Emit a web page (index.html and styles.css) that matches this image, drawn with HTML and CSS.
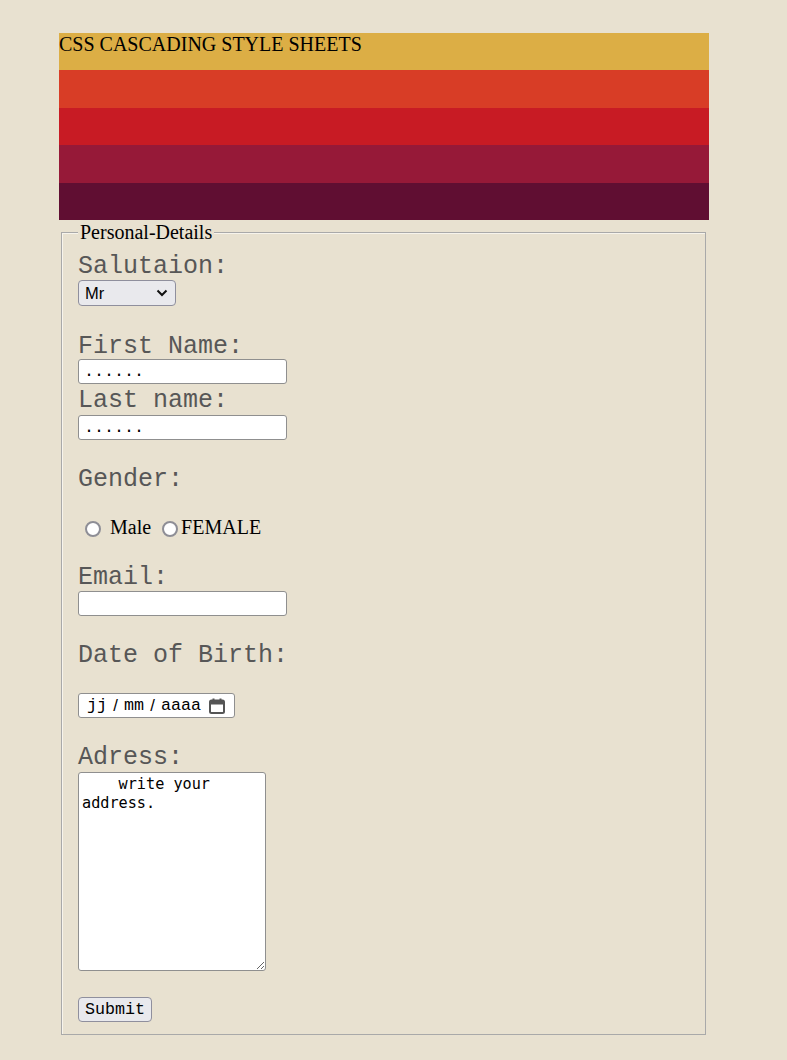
FILE: index.html
```html
<!DOCTYPE html>
<html lang="fr">
<head>
<meta charset="utf-8">
<title>CSS Cascading Style Sheets</title>
<link rel="stylesheet" href="styles.css">
</head>
<body>
<div class="wrap">
  <div class="banner">
    <div class="stripe s1">CSS CASCADING STYLE SHEETS</div>
    <div class="stripe s2"></div>
    <div class="stripe s3"></div>
    <div class="stripe s4"></div>
    <div class="stripe s5"></div>
  </div>
  <form class="form">
    <fieldset class="fs">
      <legend class="legend">Personal-Details</legend>
      <label class="lbl l-sal" for="sal">Salutaion:</label>
      <div class="select-box">
        <select id="sal" class="sel"><option>Mr</option><option>Mrs</option><option>Ms</option></select>
        <svg class="chev" width="12" height="8" viewBox="0 0 12 8"><path d="M1.5 1.5 L6 6 L10.5 1.5" fill="none" stroke="#111" stroke-width="2"/></svg>
      </div>
      <label class="lbl l-first" for="fn">First Name:</label>
      <input id="fn" class="txt t-first" type="text" value="......">
      <label class="lbl l-last" for="ln">Last name:</label>
      <input id="ln" class="txt t-last" type="text" value="......">
      <div class="lbl l-gender">Gender:</div>
      <div class="radios">
        <input class="rad r1" type="radio" name="g" id="m"><label class="rlbl" for="m">Male</label>
        <input class="rad r2" type="radio" name="g" id="f"><label class="rlbl" for="f">FEMALE</label>
      </div>
      <label class="lbl l-email" for="em">Email:</label>
      <input id="em" class="txt t-email" type="text">
      <div class="lbl l-dob">Date of Birth:</div>
      <div class="date">
        <span class="seg">jj</span><span class="sep">/</span><span class="seg">mm</span><span class="sep">/</span><span class="seg">aaaa</span>
        <svg class="cal" width="16" height="16" viewBox="0 0 16 16"><rect x="1" y="2.5" width="14" height="12.5" rx="1.5" fill="none" stroke="#555" stroke-width="2"/><rect x="1" y="2.5" width="14" height="4" fill="#555"/><rect x="3.5" y="0.5" width="2" height="3" fill="#555"/><rect x="10.5" y="0.5" width="2" height="3" fill="#555"/></svg>
      </div>
      <label class="lbl l-addr" for="ad">Adress:</label>
      <textarea id="ad" class="area">    write your address.</textarea>
      <button type="button" class="btn">Submit</button>
    </fieldset>
  </form>
</div>
</body>
</html>
```
FILE: styles.css
```css
html, body {
  margin: 0;
  padding: 0;
  background: #e8e1d0;
}
body {
  padding: 33px 0 0 59px;
  font-family: "Liberation Serif", "Times New Roman", serif;
}
.wrap {
  width: 650px;
}
.banner {
  display: flex;
  flex-direction: column;
}
.stripe {
  height: 37px;
}
.s1 {
  background: #dcae45;
  font-size: 20px;
  line-height: 23px;
  color: #000;
}
.s2 { background: #d83d26; height: 38px; }
.s3 { background: #c81b24; }
.s4 { background: #961938; height: 38px; }
.s5 { background: #600e32; }

.form {
  margin: 0;
}
.fs {
  margin: 1px 3px 0 2px;
  padding: 9px 15px 12px 16px;
  border: 1px solid #a9a9a9;
  box-shadow: inset 1px 1px 0 #f7f4ec;
  display: flex;
  flex-direction: column;
  align-items: flex-start;
  min-width: 0;
}
.legend {
  font-size: 20px;
  line-height: 23px;
  padding: 0 2px;
  color: #000;
  background: #e8e1d0;
}
.lbl {
  display: block;
  font-family: "Liberation Mono", "Courier New", monospace;
  font-size: 25px;
  line-height: 27px;
  color: #575757;
}
.select-box {
  position: relative;
  width: 98px;
  height: 26px;
}
.sel {
  appearance: none;
  -webkit-appearance: none;
  width: 98px;
  height: 26px;
  box-sizing: border-box;
  margin: 0;
  border: 1px solid #8f8f9d;
  border-radius: 4px;
  background: #e9e9ed;
  font-family: "Liberation Sans", Arial, sans-serif;
  font-size: 16.5px;
  color: #000;
  padding: 0 0 0 6px;
}
.chev {
  position: absolute;
  right: 8px;
  top: 9px;
  pointer-events: none;
}
.txt {
  display: block;
  width: 209px;
  height: 25px;
  box-sizing: border-box;
  margin: 0;
  border: 1px solid #8f8f8f;
  border-radius: 3px;
  background: #fff;
  padding: 0 5px;
  font-family: "Liberation Mono", "Courier New", monospace;
  font-size: 16.7px;
  color: #000;
}
.l-first { margin-top: 27px; }
.t-first { margin-top: -1px; }
.l-last { margin-top: 3px; }
.t-last { margin-top: 1px; }
.l-gender { margin-top: 26px; }
.radios {
  margin-top: 23px;
  height: 23px;
  display: flex;
  align-items: center;
  font-size: 20px;
  line-height: 23px;
  color: #000;
}
.rad {
  appearance: none;
  -webkit-appearance: none;
  width: 16px;
  height: 16px;
  box-sizing: border-box;
  margin: 3px 0 0 7px;
  border: 2px solid #8e8e96;
  border-radius: 50%;
  background: #fff;
}
.r2 { margin-left: 11px; }
.rlbl { margin-left: 9px; }
.r2 + .rlbl { margin-left: 3px; }
.l-email { margin-top: 25px; }
.t-email { margin-top: 0; }
.l-dob { margin-top: 26px; }
.date {
  margin-top: 24px;
  width: 157px;
  height: 25px;
  box-sizing: border-box;
  border: 1px solid #8f8f8f;
  border-radius: 3px;
  background: #fff;
  display: flex;
  align-items: center;
  padding: 0 0 0 8px;
  font-family: "Liberation Mono", "Courier New", monospace;
  font-size: 16.7px;
  color: #000;
}
.sep {
  display: inline-block;
  width: 17px;
  text-align: center;
  font-family: "Liberation Sans", Arial, sans-serif;
}
.cal {
  margin-left: 8px;
}
.l-addr { margin-top: 26px; }
.area {
  display: block;
  margin-top: 1px;
  width: 188px;
  height: 199px;
  box-sizing: border-box;
  border: 1px solid #8f8f8f;
  border-radius: 3px;
  background: #fff;
  padding: 2px 3px;
  font-family: "DejaVu Sans Mono", Consolas, monospace;
  font-size: 15.2px;
  line-height: 19px;
  color: #000;
  resize: both;
}
.btn {
  margin-top: 26px;
  width: 74px;
  height: 25px;
  box-sizing: border-box;
  border: 1px solid #8f8f9d;
  border-radius: 4px;
  background: #e9e9ed;
  font-family: "Liberation Mono", "Courier New", monospace;
  font-size: 16.7px;
  color: #000;
  padding: 0;
}
```
